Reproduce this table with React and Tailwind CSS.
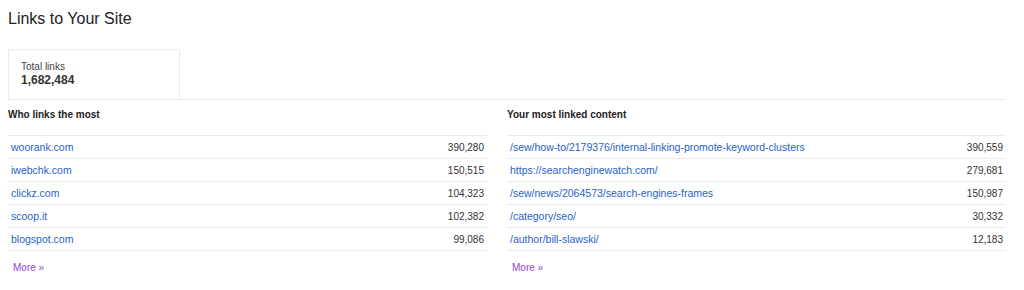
const whoLinks = [
  { site: "woorank.com", count: "390,280" },
  { site: "iwebchk.com", count: "150,515" },
  { site: "clickz.com", count: "104,323" },
  { site: "scoop.it", count: "102,382" },
  { site: "blogspot.com", count: "99,086" },
];

const linkedContent = [
  { page: "/sew/how-to/2179376/internal-linking-promote-keyword-clusters", count: "390,559" },
  { page: "https://searchenginewatch.com/", count: "279,681" },
  { page: "/sew/news/2064573/search-engines-frames", count: "150,987" },
  { page: "/category/seo/", count: "30,332" },
  { page: "/author/bill-slawski/", count: "12,183" },
];

const LinkTable = ({ title, rows }) => (
  <div>
    <div className="h-[35px] pt-[8px] text-[10px] leading-[13px] font-bold text-[#222]">
      {title}
    </div>
    <ul>
      {rows.map((row, i) => (
        <li
          key={row.label}
          className={`flex items-center justify-between h-[23px] border-t border-[#ebebeb] px-[3px] leading-[13px] ${
            i === rows.length - 1 ? "h-[24px] border-b" : ""
          }`}
        >
          <a href="#" className="text-[10.5px] text-[#2962c8]">
            {row.label}
          </a>
          <span className="text-[10px] text-[#333]">{row.count}</span>
        </li>
      ))}
    </ul>
    <div className="pt-[10px] pl-[5px] text-[10px] leading-[13px]">
      <a href="#" className="text-[#9145d4]">
        More »
      </a>
    </div>
  </div>
);

export default function App() {
  return (
    <div className="w-[1024px] h-[290px] bg-white pl-2 pr-[18px] font-['Liberation_Sans',Arial,sans-serif]">
      <h1 className="pt-[9px] text-[16px] leading-[20px] text-[#222]">
        Links to Your Site
      </h1>

      {/* Summary */}
      <div className="mt-5 border-b border-[#ebebeb]">
        <div className="w-[172px] h-[50px] border border-b-0 border-[#ebebeb] pl-3 pt-[11px]">
          <div className="text-[10px] leading-[12px] text-[#444]">Total links</div>
          <div className="text-[12px] leading-[14px] font-bold text-[#333]">
            1,682,484
          </div>
        </div>
      </div>

      <div className="grid grid-cols-2">
        <div className="pr-5">
          <LinkTable
            title="Who links the most"
            rows={whoLinks.map((r) => ({ label: r.site, count: r.count }))}
          />
        </div>
        <div>
          <LinkTable
            title="Your most linked content"
            rows={linkedContent.map((r) => ({ label: r.page, count: r.count }))}
          />
        </div>
      </div>
    </div>
  );
}
